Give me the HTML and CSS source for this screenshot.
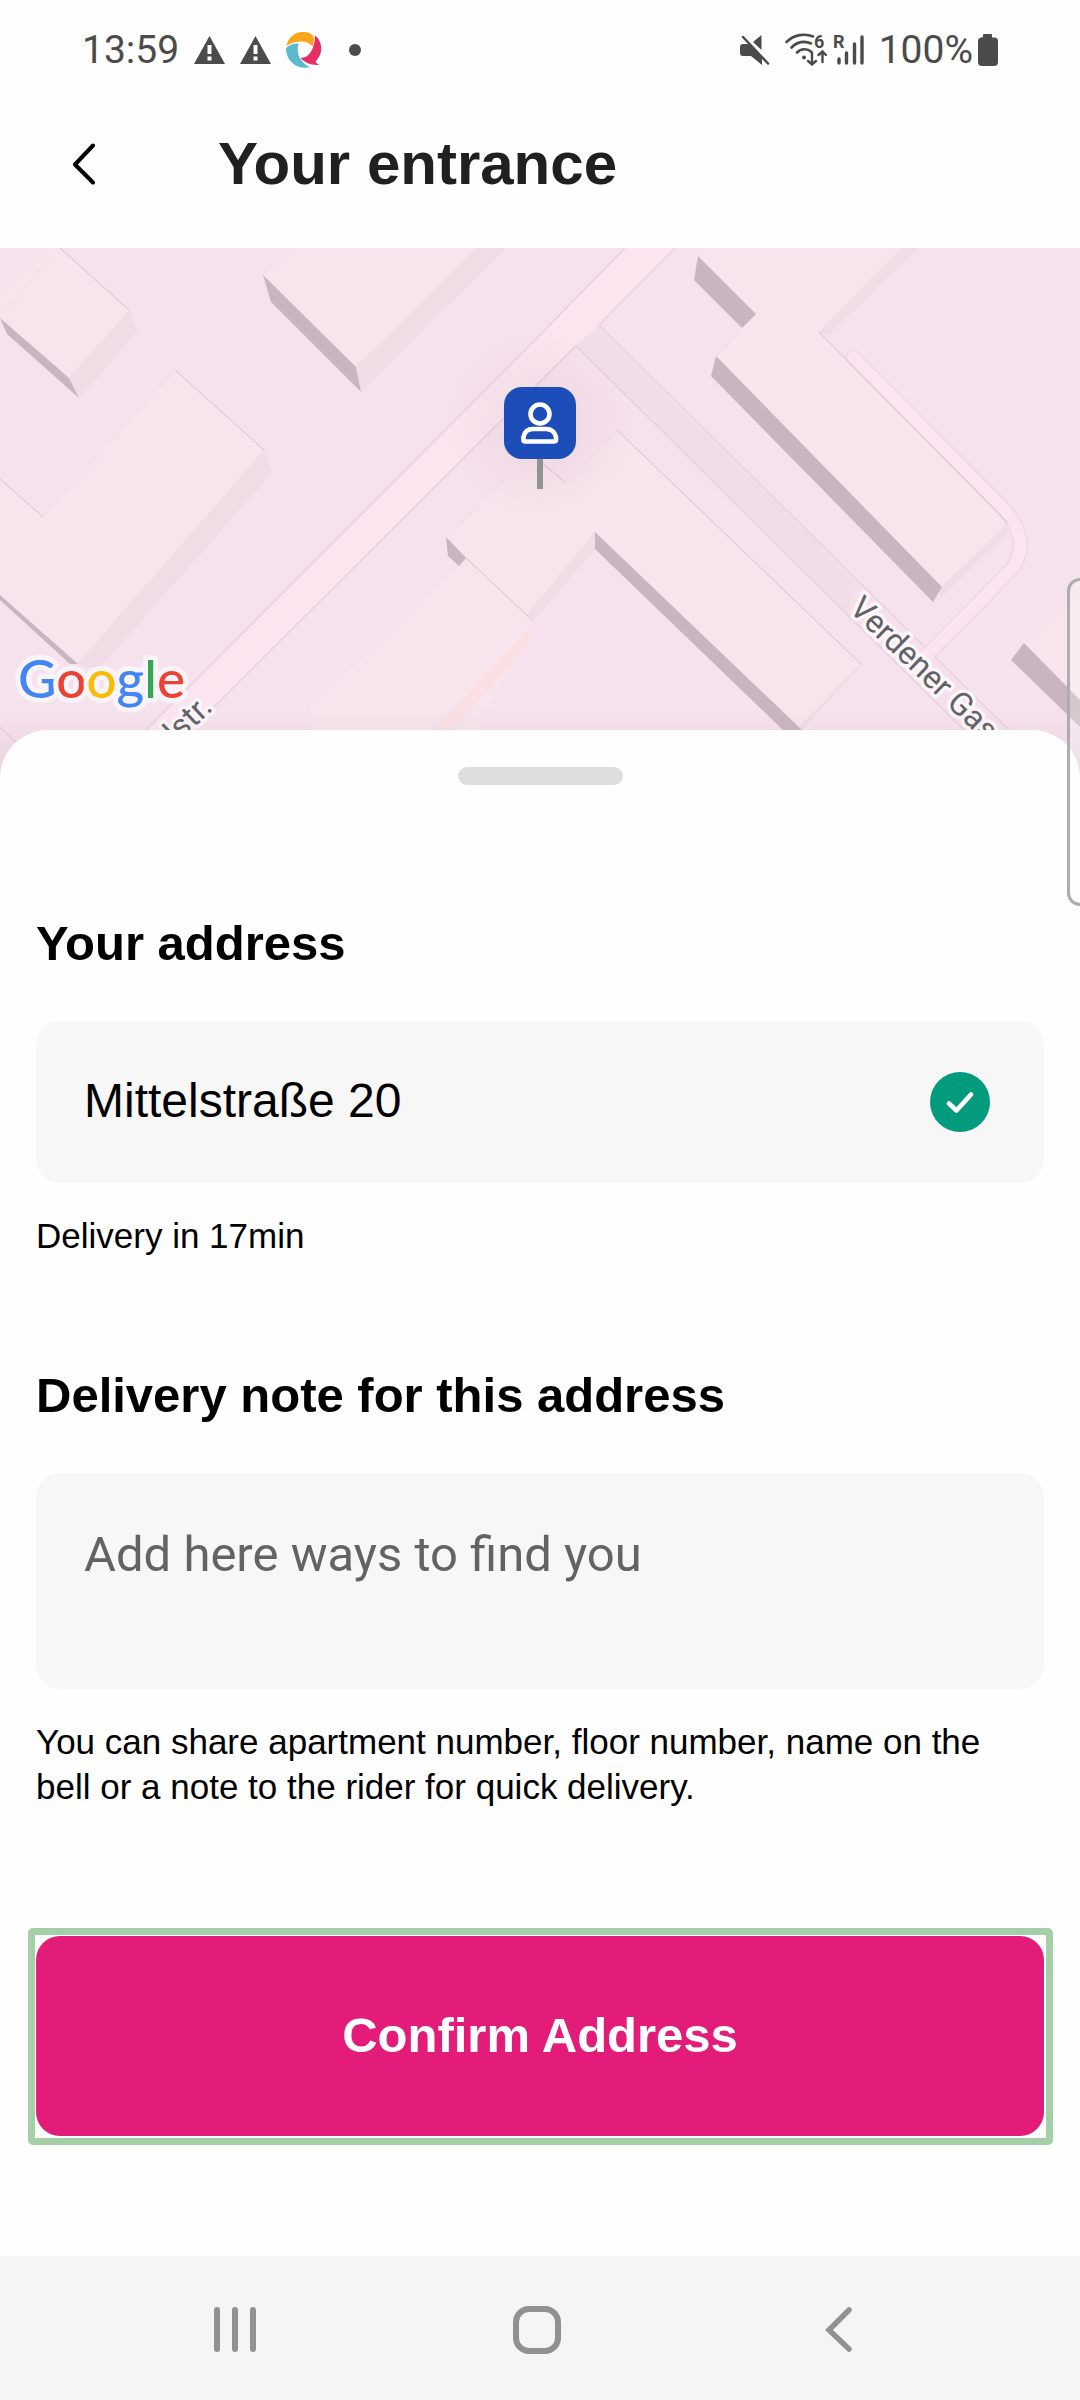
FILE: index.html
```html
<!DOCTYPE html>
<html lang="en">
<head>
<meta charset="utf-8">
<meta name="viewport" content="width=device-width, initial-scale=1">
<title>Your entrance</title>
<link rel="stylesheet" href="styles.css">
</head>
<body>
<div class="screen">
  <div class="status">
    <span class="status-text">13:59</span>
    <svg width="31" height="28" viewBox="0 0 31 28"><path d="M15.500 0L31 28H0z" fill="#4b4b4b"/><path d="M13.500 9h4v9h-4zM13.500 20.500h4v4h-4z" fill="#fff"/></svg>
    <svg width="31" height="28" viewBox="0 0 31 28"><path d="M15.500 0L31 28H0z" fill="#4b4b4b"/><path d="M13.500 9h4v9h-4zM13.500 20.500h4v4h-4z" fill="#fff"/></svg>
    <svg width="36" height="36" viewBox="0 0 36 36">
      <path d="M0.500 14C2 5 10 -1 19 0C24 0.500 28 3 28 7C28 10 27 13 26.500 15C22 8 10 8 0.500 14z" fill="#fba51a"/>
      <path d="M29 3.500C35 8 37 17 33.500 24L29.500 30C31 32 33 32.500 34.500 32.500C28 34 20 32 14.500 26C23 26 29 17 29 3.500z" fill="#e62e63"/>
      <path d="M12.500 11.500C10 20 13 30 24 35C13 38 2 31 0.300 20L0 16C3 13 8 11 12.500 11.500z" fill="#5cb9cd"/>
    </svg>
    <svg width="48" height="12" viewBox="0 0 48 12"><circle cx="18" cy="6" r="6" fill="#4b4b4b"/></svg>
    <span class="spacer"></span>
    <svg class="mute" width="30" height="32" viewBox="0 0 30 32">
      <path d="M0 13Q0 10 3 10H9L22 23V31L11 22H3Q0 22 0 19zM13 8L21.500 1V16z" fill="#4b4b4b"/>
      <path d="M3 3L28 29.500" stroke="#4b4b4b" stroke-width="2.500" stroke-linecap="round"/>
    </svg>
    <svg width="42" height="46" viewBox="0 -6 42 46" fill="none" stroke="#4b4b4b" stroke-width="2.600" stroke-linecap="round">
      <path d="M1.500 9C9 1.500 20 0 28 3.500M6.500 14.500C12 8.500 20 7.500 26 10.500M12 19.500C16 15.500 22 15 26.500 19"/>
      <circle cx="19" cy="24.500" r="2" fill="#4b4b4b" stroke="none"/>
      <path d="M27 20V31.500M23 28L27 31.500L31 28M37.500 29V18.500M33.500 22L37.500 18.500L41 22" stroke-width="2.400"/>
      <text class="mini" x="29" y="15">6</text>
    </svg>
    <svg class="signal" width="32" height="46" viewBox="-2 -6 32 46">
      <path d="M5 26V30M12.500 20V30M20.500 11V30M28 4V30" stroke="#4b4b4b" stroke-width="3.400" stroke-linecap="round"/>
      <text class="mini" x="-1" y="15">R</text>
    </svg>
    <span class="status-text">100%</span>
    <svg class="battery" width="20" height="32" viewBox="0 0 20 32"><path d="M5 3V1Q5 0 6 0H13Q14 0 14 1V3.500H17Q20 4 20 7V28Q20 32 16 32H4Q0 32 0 28V7Q0 4 3 3.500z" fill="#4b4b4b"/></svg>
  </div>

  <header class="header">
    <button class="back" type="button" aria-label="Back">
      <svg width="24" height="42" viewBox="0 0 24 42"><path d="M21 2.500L3 21.500L21 39.500" fill="none" stroke="#000" stroke-width="4" stroke-linecap="round" stroke-linejoin="round"/></svg>
    </button>
    <h1 class="title">Your entrance</h1>
  </header>

  <div class="map">
    <svg class="map-art" viewBox="0 0 1080 540" preserveAspectRatio="xMidYMin slice" role="img" aria-label="Map">
      <defs>
        <radialGradient id="glow"><stop offset=".4" stop-color="#c9a9bc" stop-opacity=".13"/><stop offset="1" stop-color="#c9a9bc" stop-opacity="0"/></radialGradient>
        <linearGradient id="fade" x1="0" y1="0" x2="0" y2="1"><stop offset="0" stop-color="#b090a0" stop-opacity="0"/><stop offset="1" stop-color="#b090a0" stop-opacity=".22"/></linearGradient>
      </defs>
      <rect width="1080" height="540" fill="#f6e2ed"/>
      <g fill="#f7e4ec">
        <path d="M60 0L129 62L69 130L0 70V46L44 0z"/>
        <path d="M175 122L264 202L77 416L0 347V231L43 269z"/>
        <path d="M263 27L356 119L477 0H293z"/>
        <path d="M446 289L516 222L540 213L566 235L617 182L862 417L802 482L595 284L533 373L466 310L310 460V540H446L533 373z"/>
        <path d="M698 8L756 66L716 108L942 339L1007 275L819 84L902 0H704z"/>
        <path d="M1024 395L1080 345V452z"/>
      </g>
      <g fill="#efdce5">
        <path d="M129 62L138 83L79 150L69 130z"/>
        <path d="M264 202L272 225L98 422L77 416z"/>
        <path d="M356 119L477 0H506L361 144z"/>
        <path d="M819 84L902 0H919L828 87z"/>
        <path d="M595 284V301L534 372L527 366z"/>
        <path d="M1006 277L1008 284L940 350V340z"/>
        <path d="M862 417L802 482H796L858 418z"/>
      </g>
      <path d="M532 378L530 395L451 483H432z" fill="#fae0e4"/>
      <path d="M625 0L540 87L145 483L90 540H133L190 483L502 172L576 98L599 77L675 0z" fill="#fbe6ef"/>
      <path d="M576 98L599 77L858 335L930 405L895 413z" fill="#efdee8"/>
      <path d="M858 335L1010 483L1030 540L965 483L846 365z" fill="#f5e0eb"/>
      <g fill="none" stroke="#e7d2de" stroke-width="1.600">
        <path d="M625 0L540 87L145 483M675 0L599 77L1010 483M190 483L502 172L576 98L965 483M0 479L18 496"/>
      </g>
      <path d="M853 109L1003 260Q1034 295 1010 323L931 403" fill="none" stroke="#ecd8e3" stroke-width="15" stroke-linecap="round"/>
      <path d="M853 109L1003 260Q1034 295 1010 323L928 406" fill="none" stroke="#fbe6ef" stroke-width="12" stroke-linecap="round"/>
      <g fill="none" stroke="#d3c0ca" stroke-width="1">
        <path d="M60 0L129 62M175 122L264 202M0 231L43 269M466 310L533 373M540 213L566 235M617 182L862 417M819 84L1008 275"/>
      </g>
      <g fill="none" stroke="#f0dde5" stroke-width="1">
        <path d="M43 269L175 122M0 70L50 10M446 289L516 222M566 235L617 182M716 108L742 80M263 27L293 0M1024 395L1080 345"/>
      </g>
      <g fill="#c9b5bf">
        <path d="M0 70L69 130L79 150L7 86z"/>
        <path d="M0 347L78 416H70L0 352z"/>
        <path d="M263 27L356 119L361 144L271 54z"/>
        <path d="M446 289L466 310L459 318L448 308z"/>
        <path d="M595 284L802 482L784 483L595 301z"/>
        <path d="M698 8L756 66L742 80L694 32z"/>
        <path d="M716 108L942 339L933 354L711 128z"/>
        <path d="M1024 395L1080 452V479L1011 412z"/>
      </g>
      <circle cx="540" cy="175" r="95" fill="url(#glow)"/>
      <text class="street" transform="translate(848 362) rotate(44)">Verdener Gas</text>
      <text class="street" text-anchor="end" transform="translate(214 461) rotate(-43)">lstr.</text>
      <text class="google" x="18" y="450"><tspan fill="#4285f4">G</tspan><tspan fill="#ea4335">o</tspan><tspan fill="#fbbc05">o</tspan><tspan fill="#4285f4">g</tspan><tspan fill="#34a853">l</tspan><tspan fill="#ea4335">e</tspan></text>
      <rect y="460" width="1080" height="80" fill="url(#fade)"/>
      <path d="M537 205H543V241H537z" fill="#929292"/>
      <rect x="504" y="139" width="72" height="72" rx="18" fill="#1c4db8"/>
      <g fill="none" stroke="#fff" stroke-width="4.600">
        <circle cx="540" cy="166" r="9.500"/>
        <path d="M523.500 192V189Q525 181 533 181H546Q554 181 556 189V192Q556 193.500 554 193.500H525Q523.500 193.500 523.500 192z" stroke-linejoin="round"/>
      </g>
    </svg>
  </div>

  <main class="sheet">
    <div class="grabber"></div>
    <form class="form">
      <label class="heading" for="address">Your address</label>
      <div class="field">
        <input class="field-input" id="address" type="text" value="Mittelstraße 20">
        <svg width="60" height="60" viewBox="0 0 60 60"><circle cx="30" cy="30" r="30" fill="#039b7c"/><path d="M19 31.500L26.500 38.500L41 22.500" fill="none" stroke="#fff" stroke-width="4.600" stroke-linecap="round" stroke-linejoin="round"/></svg>
      </div>
      <p class="hint">Delivery in 17min</p>
      <label class="heading heading-note" for="note">Delivery note for this address</label>
      <textarea class="note" id="note" placeholder="Add here ways to find you"></textarea>
      <p class="hint">You can share apartment number, floor number, name on the bell or a note to the rider for quick delivery.</p>
      <div class="focus-frame">
        <button class="confirm" type="button">Confirm Address</button>
      </div>
    </form>
  </main>

  <nav class="navbar">
    <button class="nav-button" type="button" aria-label="Recent apps"><svg width="50" height="50" viewBox="0 0 50 50"><path d="M7 5V44M25 5V44M43 5V44" stroke="#919191" stroke-width="6" stroke-linecap="round"/></svg></button>
    <button class="nav-button" type="button" aria-label="Home"><svg width="50" height="50" viewBox="0 0 50 50"><rect x="4" y="4" width="42" height="42" rx="13" fill="none" stroke="#919191" stroke-width="6"/></svg></button>
    <button class="nav-button" type="button" aria-label="Back"><svg width="50" height="50" viewBox="0 0 50 50"><path d="M35 5L15 25L35 44" fill="none" stroke="#919191" stroke-width="5.500" stroke-linecap="round"/></svg></button>
  </nav>
  <div class="edge-panel"></div>
</div>
</body>
</html>
```

FILE: styles.css
```css
* {
  box-sizing: border-box;
}

body {
  margin: 0;
  background: #fefefe;
  color: #000;
  font-family: "Liberation Sans", Arial, sans-serif;
}

button,
input,
textarea {
  margin: 0;
  padding: 0;
  border: 0;
  background: none;
  font: inherit;
  color: inherit;
}

svg {
  display: block;
  flex: none;
}

.screen {
  position: relative;
  display: flex;
  flex-direction: column;
  min-height: 100vh;
  overflow: hidden;
}

/* Status bar */
.status {
  display: flex;
  align-items: center;
  gap: 15px;
  height: 100px;
  padding: 0 82px;
}

.status-text {
  color: #4b4b4b;
  font: 39px/48px Roboto, sans-serif;
}

.spacer {
  flex: 1;
}

.signal {
  margin-left: -10px;
}

.battery {
  margin-left: -10px;
}

.mini {
  fill: #4b4b4b;
  stroke: none;
  font: bold 18px Roboto, sans-serif;
}

/* Header */
.header {
  display: flex;
  align-items: center;
  height: 148px;
  padding: 0 72px 20px;
  gap: 122px;
}

.back {
  display: flex;
}

.title {
  margin: 0;
  color: #202020;
  font-size: 60px;
  line-height: 72px;
}

/* Map */
.map {
  height: 540px;
  background: #f6e2ed;
}

.map-art {
  width: 100%;
  height: 100%;
}

.street {
  fill: #5f6366;
  stroke: #fdf5f9;
  stroke-width: 7px;
  stroke-linejoin: round;
  paint-order: stroke;
  font: 32px Roboto, sans-serif;
}

.google {
  stroke: #faf3f8;
  stroke-width: 10px;
  stroke-linejoin: round;
  paint-order: stroke;
  font: 500 53px Lato, sans-serif;
}

/* Bottom sheet */
.sheet {
  position: relative;
  flex: 1;
  margin-top: -58px;
  padding: 37px 0 110px;
  border-radius: 48px 48px 0 0;
  background: #fefefe;
}

.grabber {
  width: 165px;
  height: 18px;
  margin: 0 auto;
  border-radius: 9px;
  background: #dedede;
}

.form {
  display: flex;
  flex-direction: column;
  padding: 128px 36px 0;
}

.heading {
  font-size: 49px;
  font-weight: bold;
  line-height: 60px;
}

.field {
  display: flex;
  align-items: center;
  height: 162px;
  margin-top: 48px;
  padding: 0 54px 0 48px;
  border-radius: 24px;
  background: #f7f7f7;
}

.field-input {
  flex: 1;
  min-width: 0;
  padding-bottom: 2px;
  font-size: 48px;
  line-height: 60px;
}

.hint {
  margin: 30px 0 0;
  font-size: 35px;
  line-height: 45px;
}

.heading-note {
  margin-top: 107px;
}

.note {
  height: 216px;
  margin-top: 48px;
  padding: 50px 48px;
  border-radius: 24px;
  background: #f7f7f7;
  font: 49px/64px Roboto, sans-serif;
  resize: none;
}

.note::placeholder {
  color: #636363;
  opacity: 1;
}

.focus-frame {
  margin: 119px -9px 0 -8px;
  padding: 1px 2px 2px 1px;
  border: 7px solid #a5cfa6;
  border-radius: 5px;
}

.confirm {
  display: block;
  width: 100%;
  height: 200px;
  padding-bottom: 3px;
  border-radius: 24px;
  background: #e31c79;
  color: #fff;
  font-size: 49px;
  font-weight: bold;
}

/* System navigation */
.navbar {
  display: grid;
  grid-template-columns: repeat(3, 1fr);
  height: 144px;
  padding: 4px 90px 0 84px;
  background: #f5f5f5;
}

.nav-button {
  display: flex;
  align-items: center;
  justify-content: center;
}

/* Edge panel handle lies over the page at the right border */
.edge-panel {
  position: absolute;
  top: 578px;
  right: 0;
  width: 13px;
  height: 328px;
  border: 3px solid #adadad;
  border-right: 0;
  border-radius: 14px 0 0 14px;
  background: rgba(255, 255, 255, 0.25);
}
```
